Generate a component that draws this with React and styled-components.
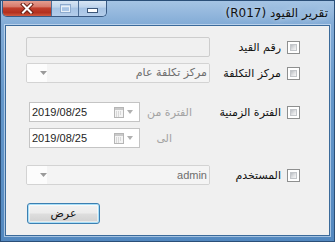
import React from "react";
import styled, { createGlobalStyle } from "styled-components";

const GlobalStyle = createGlobalStyle`
  html, body {
    margin: 0;
    padding: 0;
    background: #5a8cc0;
  }
  body {
    font-family: "DejaVu Sans", sans-serif;
  }
`;

const Window = styled.div`
  width: 335px;
  height: 242px;
  box-sizing: border-box;
  display: flex;
  flex-direction: column;
  border: 1px solid #2b4f78;
  background: linear-gradient(
    180deg,
    #a5c4e4 0%,
    #82abd6 10%,
    #6497ca 40%,
    #5388bf 100%
  );
  overflow: hidden;
`;

const TitleBar = styled.div`
  height: 24px;
  flex: none;
  display: flex;
  justify-content: space-between;
  align-items: flex-start;
`;

const CaptionGroup = styled.div`
  display: flex;
  height: 16px;
  margin-left: 1px;
  margin-top: -1px;
  border: 1px solid #3a5a83;
  border-top: none;
  border-radius: 0 0 5px 5px;
  overflow: hidden;
`;

const CaptionButton = styled.div`
  width: ${(p) => p.$w}px;
  height: 100%;
  display: flex;
  align-items: center;
  justify-content: center;
  border-right: ${(p) => (p.$last ? "none" : "1px solid #4d6f98")};
  background: ${(p) =>
    p.$close
      ? "linear-gradient(180deg, #e7a497 0%, #d87a6b 42%, #c23f2d 50%, #b3301e 78%, #cf5a40 100%)"
      : "linear-gradient(180deg, #dbe8f5 0%, #bfd4ec 45%, #a6c3e4 50%, #b4cdea 100%)"};
`;

const TitleText = styled.div`
  direction: ltr;
  font-size: 12px;
  line-height: 24px;
  color: #111;
  padding-right: 6px;
  white-space: nowrap;
  text-shadow: 0 0 6px rgba(255, 255, 255, 0.7);
`;

const Client = styled.div`
  flex: 1;
  margin: 0 4px 5px 4px;
  border: 1px solid #3b6a9a;
  box-shadow: 0 0 0 1px rgba(220, 234, 248, 0.6);
  background: #f0f0f0;
  padding: 11px 29px 0 20px;
`;

const Form = styled.div`
  direction: rtl;
  display: flex;
  flex-direction: column;
`;

const Row = styled.div`
  display: grid;
  grid-template-columns: 13px 1fr 184px;
  grid-auto-rows: 20px;
  row-gap: 6px;
  align-items: center;
  margin-top: ${(p) => p.$gap || 0}px;
`;

const Check = styled.div`
  width: 13px;
  height: 13px;
  box-sizing: border-box;
  border: 1px solid #8e8f8f;
  background: #fff;
  padding: 2px;
  grid-column: 1;

  &::after {
    content: "";
    display: block;
    width: 100%;
    height: 100%;
    box-sizing: border-box;
    border: 1px solid #c3c6ca;
    background: linear-gradient(135deg, #b9bdc2 0%, #e4e5e7 60%, #f6f6f6 100%);
  }
`;

const Label = styled.div`
  grid-column: 2;
  font-size: 11px;
  color: #111;
  padding-right: 6px;
  white-space: nowrap;
`;

const TextBox = styled.div`
  grid-column: 3;
  height: 20px;
  box-sizing: border-box;
  border: 1px solid #cdcdcd;
  border-radius: 2px;
  background: #f0f0f0;
`;

const Combo = styled.div`
  grid-column: 3;
  height: 20px;
  box-sizing: border-box;
  display: flex;
  border: 1px solid #d3d3d3;
  border-radius: 2px;
  overflow: hidden;
`;

const ComboText = styled.div`
  flex: 1;
  background: #f4f4f4;
  color: #6d6d6d;
  font-size: 11px;
  line-height: 18px;
  padding-right: 2px;
  white-space: nowrap;
  font-family: ${(p) => (p.$latin ? '"Liberation Sans", sans-serif' : "inherit")};
`;

const ComboArrow = styled.div`
  width: 20px;
  background: #fcfcfc;
  display: flex;
  align-items: center;
  padding-left: 4px;
  box-sizing: border-box;
`;

const SubField = styled.div`
  grid-column: 3;
  display: grid;
  grid-template-columns: 1fr 111px;
  align-items: center;
  padding-left: 3px;
`;

const SubLabel = styled.div`
  font-size: 11px;
  color: #a3a3a3;
  padding-right: ${(p) => p.$inset}px;
  white-space: nowrap;
`;

const DateBox = styled.div`
  direction: ltr;
  height: 20px;
  box-sizing: border-box;
  border: 1px solid #c4c4c4;
  background: #fff;
  display: flex;
  align-items: center;
  padding: 0 6px 0 2px;
  font-family: "Liberation Sans", sans-serif;
  font-size: 11px;
  color: #1e1e1e;
`;

const DateValue = styled.span`
  flex: 1;
`;

const DateIcons = styled.div`
  display: flex;
  align-items: center;
  gap: 3px;
`;

const ButtonRow = styled.div`
  direction: ltr;
  display: flex;
  margin-top: 18px;
  padding-left: 1px;
`;

const Button = styled.div`
  width: 73px;
  height: 21px;
  box-sizing: border-box;
  border: 1px solid #3c7fb1;
  border-radius: 3px;
  background: linear-gradient(180deg, #f3f3f3 0%, #ececec 48%, #dedede 52%, #d0d0d0 100%);
  box-shadow: inset 0 0 0 1px #a9dff8, inset 0 0 0 2px rgba(255, 255, 255, 0.5);
  display: flex;
  align-items: center;
  justify-content: center;
  font-size: 11px;
  color: #111;
`;

const DownArrow = ({ w = 7, color = "#9a9a9a" }) => (
  <svg width={w} height={4} viewBox={`0 0 ${w} 4`}>
    <path d={`M0 0 H${w} L${w / 2} 4 Z`} fill={color} />
  </svg>
);

const CalendarIcon = () => (
  <svg width="10" height="11" viewBox="0 0 10 11">
    <rect x="0.5" y="0.5" width="9" height="10" fill="#f4f4f4" stroke="#b5b5b5" />
    <rect x="1" y="1" width="8" height="2" fill="#c9c9c9" />
    <path d="M2 5h1M4 5h1M6 5h1M2 7h1M4 7h1M6 7h1M2 9h1M4 9h1" stroke="#bdbdbd" />
  </svg>
);

const CloseGlyph = () => (
  <svg width="14" height="11" viewBox="0 0 14 11">
    <path d="M3 1.5 L11 9.5 M11 1.5 L3 9.5" stroke="#6b2116" strokeWidth="4" strokeLinecap="square" />
    <path d="M3 1.5 L11 9.5 M11 1.5 L3 9.5" stroke="#fff" strokeWidth="2" strokeLinecap="square" />
  </svg>
);

const MaxGlyph = () => (
  <svg width="11" height="9" viewBox="0 0 11 9">
    <rect x="0.5" y="0.5" width="10" height="8" fill="none" stroke="#8eabce" />
    <rect x="1.5" y="2.5" width="8" height="5" fill="none" stroke="#e8f0f8" />
  </svg>
);

const MinGlyph = () => (
  <svg width="11" height="9" viewBox="0 0 11 9">
    <rect x="0.5" y="4.5" width="10" height="4" fill="#fff" stroke="#3c5678" />
  </svg>
);

export default function App() {
  return (
    <>
      <GlobalStyle />
      <Window>
        <TitleBar>
          <CaptionGroup>
            <CaptionButton $w={48} $close>
              <CloseGlyph />
            </CaptionButton>
            <CaptionButton $w={26}>
              <MaxGlyph />
            </CaptionButton>
            <CaptionButton $w={27} $last>
              <MinGlyph />
            </CaptionButton>
          </CaptionGroup>
          <TitleText>(R017) تقرير القيود</TitleText>
        </TitleBar>
        <Client>
          <Form>
            <Row>
              <Check />
              <Label>رقم القيد</Label>
              <TextBox />
            </Row>
            <Row $gap={6}>
              <Check />
              <Label>مركز التكلفة</Label>
              <Combo>
                <ComboText>مركز تكلفة عام</ComboText>
                <ComboArrow>
                  <DownArrow />
                </ComboArrow>
              </Combo>
            </Row>
            <Row $gap={19}>
              <Check />
              <Label>الفترة الزمنية</Label>
              <SubField>
                <SubLabel $inset={18}>الفترة من</SubLabel>
                <DateBox>
                  <DateValue>2019/08/25</DateValue>
                  <DateIcons>
                    <CalendarIcon />
                    <DownArrow w={6} color="#b0b0b0" />
                  </DateIcons>
                </DateBox>
              </SubField>
              <SubField>
                <SubLabel $inset={38}>الى</SubLabel>
                <DateBox>
                  <DateValue>2019/08/25</DateValue>
                  <DateIcons>
                    <CalendarIcon />
                    <DownArrow w={6} color="#b0b0b0" />
                  </DateIcons>
                </DateBox>
              </SubField>
            </Row>
            <Row $gap={17}>
              <Check />
              <Label>المستخدم</Label>
              <Combo>
                <ComboText $latin>admin</ComboText>
                <ComboArrow>
                  <DownArrow />
                </ComboArrow>
              </Combo>
            </Row>
            <ButtonRow>
              <Button>عرض</Button>
            </ButtonRow>
          </Form>
        </Client>
      </Window>
    </>
  );
}
